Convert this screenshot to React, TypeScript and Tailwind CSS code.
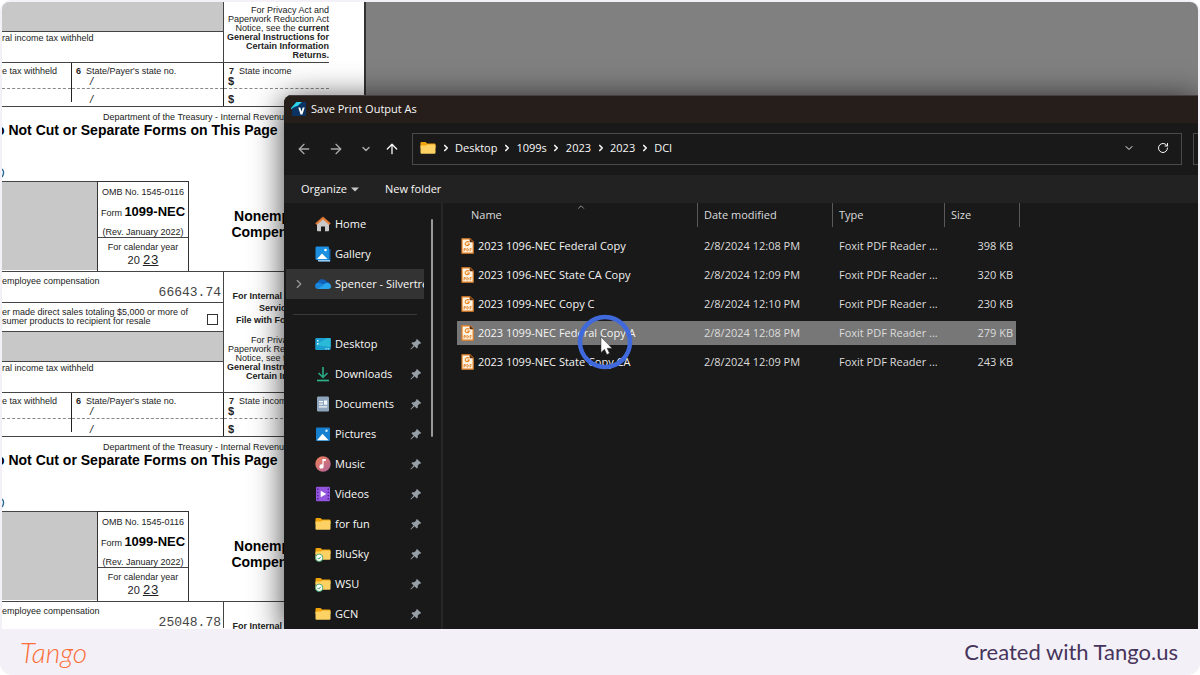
import type { ReactNode } from "react";
import { ArrowLeft, ArrowRight, ArrowUp, ChevronDown, ChevronRight, ChevronUp, RotateCw } from "lucide-react";

const crumbs = ["Desktop", "1099s", "2023", "2023", "DCI"];

const files = [
  { name: "2023 1096-NEC Federal Copy", date: "2/8/2024 12:08 PM", size: "398 KB" },
  { name: "2023 1096-NEC State CA Copy", date: "2/8/2024 12:09 PM", size: "320 KB" },
  { name: "2023 1099-NEC Copy C", date: "2/8/2024 12:10 PM", size: "230 KB" },
  { name: "2023 1099-NEC Federal Copy A", date: "2/8/2024 12:08 PM", size: "279 KB", selected: true },
  { name: "2023 1099-NEC State Copy CA", date: "2/8/2024 12:09 PM", size: "243 KB" },
];

/* ---------- icons ---------- */

function FolderIcon({ synced = false }: { synced?: boolean }) {
  return (
    <svg viewBox="0 0 16 16" className="w-4 h-4 shrink-0">
      <path d="M0.5 3a1 1 0 0 1 1-1h4l1.6 1.6H14.5a1 1 0 0 1 1 1V8H0.5z" fill="#f0a30a" />
      <path d="M0.5 5.6h5.6l1.2-1.2h7.2a1 1 0 0 1 1 1v7.4a1 1 0 0 1-1 1h-13a1 1 0 0 1-1-1z" fill="#fdd264" />
      {synced && (
        <>
          <circle cx="4.2" cy="11.8" r="3.7" fill="#fff" stroke="#35a162" strokeWidth="0.9" />
          <path d="M2.5 11.9l1.2 1.2 2.2-2.4" fill="none" stroke="#2d9a5a" strokeWidth="1" />
        </>
      )}
    </svg>
  );
}

function HomeIcon() {
  return (
    <svg viewBox="0 0 16 16" className="w-4 h-4 shrink-0">
      <path d="M2 7l6-5 6 5v7.4a.8.8 0 0 1-.8.8H10V10.5H6v4.7H2.8a.8.8 0 0 1-.8-.8z" fill="#c9c9c9" />
      <path d="M8 .8L.5 7.3l1.1 1.4L8 3.3l6.4 5.4 1.1-1.4z" fill="#e8803a" stroke="#d9692a" strokeWidth="0.4" />
    </svg>
  );
}

function GalleryIcon() {
  return (
    <svg viewBox="0 0 16 16" className="w-4 h-4 shrink-0">
      <path d="M3 3h12.5v12.5H4.5z" fill="#1565ac" />
      <path d="M3 14h12v1.5H3z" fill="#9cc9ee" />
      <rect x="0.5" y="0.5" width="13.5" height="13.5" rx="1.3" fill="#1d8fe0" />
      <path d="M2 13l5-5.5 5.5 5.5z" fill="#fff" />
      <circle cx="10.5" cy="4" r="1.3" fill="#fff" />
    </svg>
  );
}

function CloudIcon() {
  return (
    <svg viewBox="0 0 16 16" className="w-4 h-4 shrink-0">
      <path d="M3 12.5A3 3 0 0 1 2.6 6.6 5 5 0 0 1 11.6 5.5 3.7 3.7 0 0 1 13 12.5z" fill="#0f62b8" />
      <path d="M2.5 12.8c2-2 5-4.6 8.5-5.8 3-.6 5 1.2 5 3.3a2.7 2.7 0 0 1-2.7 2.7H3.4z" fill="#29a4ee" />
      <path d="M.2 10c0-2 1.5-3.4 3.6-3.3 2 .1 3.4 1.3 5 2.3L2.8 12.9A2.8 2.8 0 0 1 .2 10z" fill="#1a86dc" />
    </svg>
  );
}

function DesktopIcon() {
  return (
    <svg viewBox="0 0 16 16" className="w-4 h-4 shrink-0">
      <rect x="0.3" y="2" width="15.4" height="12" rx="1" fill="#1a9fd0" />
      <path d="M0.3 9L12 2h2.7a1 1 0 0 1 1 1v8z" fill="#2bb9d8" />
      <path d="M2 4h1.5v1.5H2zM2 7h1.5v1.5H2z" fill="#dff6fd" />
      <path d="M10.5 12.3h1.2v1h-1.2zM12.7 12.3h1.2v1h-1.2z" fill="#dff6fd" />
    </svg>
  );
}

function DownloadsIcon() {
  return (
    <svg viewBox="0 0 16 16" className="w-4 h-4 shrink-0" fill="none" strokeWidth="1.7">
      <path d="M8 1v10M3.5 7L8 11.3 12.5 7" stroke="#2aa583" />
      <path d="M2 14.5h12" stroke="#2db38b" />
    </svg>
  );
}

function DocumentsIcon() {
  return (
    <svg viewBox="0 0 16 16" className="w-4 h-4 shrink-0">
      <rect x="2" y="0.5" width="12" height="15" rx="1.2" fill="#8fa5bd" />
      <path d="M4 5h4v1.3H4zM4 7.5h4v1.2H4zM9 4.5h3.2v4.2H9zM4 10.3h8.2v1.2H4z" fill="#f4f8fc" />
    </svg>
  );
}

function PicturesIcon() {
  return (
    <svg viewBox="0 0 16 16" className="w-4 h-4 shrink-0">
      <rect x="1" y="1.5" width="14" height="13.5" rx="1" fill="#1580cf" />
      <path d="M2 14.2l5.5-6.5 6 6.5z" fill="#fff" />
      <circle cx="11.5" cy="4.8" r="1.2" fill="#d7efff" />
    </svg>
  );
}

function MusicIcon() {
  return (
    <svg viewBox="0 0 16 16" className="w-4 h-4 shrink-0">
      <defs>
        <linearGradient id="music" x1="0" y1="0" x2="1" y2="1">
          <stop offset="0" stopColor="#ef8157" />
          <stop offset="1" stopColor="#b0619c" />
        </linearGradient>
      </defs>
      <circle cx="8" cy="8" r="7.7" fill="url(#music)" />
      <path d="M7.4 3h3.4v2H8.600v5.4a2.1 2.1 0 1 1-1.2-1.8z" fill="#fff" />
    </svg>
  );
}

function VideosIcon() {
  return (
    <svg viewBox="0 0 16 16" className="w-4 h-4 shrink-0">
      <rect x="1" y="0.8" width="14" height="14.5" rx="1.2" fill="#9355de" />
      <path
        d="M2 2.5h1.4v1.4H2zM2 5.7h1.4v1.4H2zM2 8.9h1.4v1.4H2zM2 12.1h1.4v1.4H2zM12.6 2.5H14v1.4h-1.4zM12.6 5.7H14v1.4h-1.4zM12.6 8.9H14v1.4h-1.4zM12.6 12.1H14v1.4h-1.4z"
        fill="#4d2192"
      />
      <path d="M5.7 4.8l5.6 3.2-5.6 3.2z" fill="#fff" />
    </svg>
  );
}

function PinIcon() {
  return (
    <svg viewBox="0 0 12 12" className="w-3 h-3 shrink-0">
      <path d="M7 .9l4.2 4.2-.9.7-.7-.1-1.8 1.9v1.9l-1 1-2.3-2.3L1 11.4l-.5-.4 3.1-3.5L1.4 5.3l1-1h2L6.2 2.5V1.8z" fill="#969ea6" />
    </svg>
  );
}

function PdfIcon() {
  return (
    <svg viewBox="0 0 13 16" className="w-[13px] h-4 shrink-0">
      <path d="M1 .8h8l3.2 3.2v11.2H1z" fill="#fff4e2" stroke="#e07c1e" strokeWidth="1.2" />
      <path d="M8.7.5v3.8h3.8z" fill="#5b2c0c" />
      <path d="M8.2 3.9C5.6 3 4 4.5 4.2 6.3c.2 1.6 3.4 1.9 4.1-.3H6.4" fill="none" stroke="#e8811b" strokeWidth="1.1" />
      <path d="M3 13.5v-3h1.3v1.5H3M5.9 10.5v2.5h.7l.8-.7v-1.2l-.8-.6zM9.1 13.5v-3h1.5M9.2 12h1.2" fill="none" stroke="#e07c1e" strokeWidth="0.8" />
    </svg>
  );
}

function AppIcon() {
  return (
    <svg viewBox="0 0 16 16" className="w-4 h-4 shrink-0">
      <path d="M5 1h10v14H1V8z" fill="#0c3463" />
      <path d="M0 8.5V7L5.5 1H11L6.5 5C4 5.5 1.8 6.5 0 8.5z" fill="#2ed3ee" />
      <path d="M7.3 6.5h2l1.2 4 1.2-4h2l-2.3 7h-1.9z" fill="#fff" />
    </svg>
  );
}

/* ---------- printed form behind the dialog ---------- */

function FormCopy({ amount, id, cut = false }: { amount: string; id: string; cut?: boolean }) {
  return (
    <section className="text-[9px] leading-[9px] text-[#222] whitespace-nowrap">
      <div className="flex w-[327px] h-[61px] border-b border-[#444]">
        <div className="w-[222px] border-r border-[#444]">
          <div className="h-[30px] bg-[#c8c8c8] border-b border-[#444]" />
          <p className="pt-[2px]">ral income tax withheld</p>
        </div>
        <p className="flex-1 pt-1 flex flex-col items-end">
          <span>For Privacy Act and</span>
          <span>Paperwork Reduction Act</span>
          <span>
            Notice, see the <b>current</b>
          </span>
          <b>General Instructions for</b>
          <b>Certain Information</b>
          <b>Returns.</b>
        </p>
      </div>

      <div className="flex w-[327px] h-11 border-b border-[#444]">
        <div className="w-[70px] mb-1 border-r border-[#222]">
          <p className="h-[26px] pt-1 border-b border-dashed border-[#888]">e tax withheld</p>
        </div>
        <div className="w-[152px] border-r border-[#222]">
          <div className="h-[26px] pt-1 pl-1 border-b border-dashed border-[#888]">
            <p>
              <b>6</b>&nbsp; State/Payer's state no.
            </p>
            <i className="block pt-px pl-[14px] text-[11px]">/</i>
          </div>
          <i className="block pt-[6px] pl-[18px] text-[11px]">/</i>
        </div>
        <div className="flex-1">
          <div className="h-[26px] pt-1 pl-1 border-b border-dashed border-[#888]">
            <p className="pl-px">
              <b>7</b>&nbsp; State income
            </p>
            <b className="block pt-px text-[11px]">$</b>
          </div>
          <b className="block pt-[6px] pl-1 text-[11px]">$</b>
        </div>
      </div>

      <div className="h-[74px] pt-[6px]">
        <p className="pl-[101px]">Department of the Treasury - Internal Revenue Service</p>
        <h2 className="-ml-[6px] text-[14px] leading-4 font-bold text-black">o Not Cut or Separate Forms on This Page</h2>
        <svg viewBox="0 0 4 10" className="w-1 h-[10px] mt-[30px]">
          <path d="M0 1c2 2 2 5 0 8" fill="none" stroke="#2b6a94" strokeWidth="1.4" />
        </svg>
      </div>

      <div className="flex h-[91px] border-b border-[#444]">
        <div className="w-[95px] shrink-0 pb-px border-t border-[#444]">
          <div className="h-full bg-[#c8c8c8]" />
        </div>
        <div className="w-[92px] shrink-0 border-t border-x border-[#333] text-center">
          <div className="h-[56px] pt-[6px] border-b border-[#444]">
            <p>OMB No. 1545-0116</p>
            <p className="py-[7px] leading-4">
              Form <b className="text-[13px] text-black">1099-NEC</b>
            </p>
            <p>(Rev. January 2022)</p>
          </div>
          <p className="pt-[5px]">For calendar year</p>
          <p className="text-[11px] leading-4">
            20 <u className="font-['Liberation_Mono',monospace] text-[13px]">23</u>
          </p>
        </div>
        <h3 className="w-[182px] shrink-0 pt-[27px] text-center text-[14px] leading-4 font-bold text-black">
          Nonemployee
          <br />
          Compensation
        </h3>
      </div>

      <div className={`flex w-[327px] ${cut ? "h-[26px]" : "h-[60px]"}`}>
        <div className="w-[222px] border-r border-[#444]">
          <div className={`pt-[5px] ${cut ? "" : "h-[31px] border-b border-[#444]"}`}>
            <p>employee compensation</p>
            <p className="pr-[2px] text-right font-['Liberation_Mono',monospace] text-[13px] leading-[13px] text-[#444]">{amount}</p>
          </div>
          {!cut && (
            <div className="h-[29px] flex items-center justify-between pr-[5px] border-b border-[#444]">
              <label htmlFor={id}>
                er made direct sales totaling $5,000 or more of
                <br />
                sumer products to recipient for resale
              </label>
              <input id={id} type="checkbox" className="appearance-none w-[11px] h-[11px] mt-1 border border-[#333] bg-white" />
            </div>
          )}
        </div>
        <p className="w-[98px] pt-5 flex flex-col items-end gap-[3px] font-bold">
          <span>For Internal Revenue</span>
          {!cut && (
            <>
              <span>Service Center</span>
              <span>File with Form 1096.</span>
            </>
          )}
        </p>
      </div>
    </section>
  );
}

/* ---------- save dialog ---------- */

function SideItem({
  icon,
  label,
  pinned = false,
  active = false,
}: {
  icon: ReactNode;
  label: string;
  pinned?: boolean;
  active?: boolean;
}) {
  return (
    <a href="#" className={`flex items-center h-[30px] ml-[2px] mr-[17px] ${active ? "bg-[#333333]" : "pr-[2px]"}`}>
      <span className="w-[29px] shrink-0 pl-[6px]">{active && <ChevronRight className="w-[14px] h-[14px] text-[#9a9a9a]" />}</span>
      {icon}
      <span className="flex-1 pl-1 whitespace-nowrap overflow-hidden">{label}</span>
      {pinned && <PinIcon />}
    </a>
  );
}

function Sidebar() {
  return (
    <nav className="relative w-[159px] shrink-0 pt-[6px] border-r-2 border-[#272727] overflow-hidden">
      <SideItem icon={<HomeIcon />} label="Home" />
      <SideItem icon={<GalleryIcon />} label="Gallery" />
      <SideItem icon={<CloudIcon />} label="Spencer - Silvertre" active />
      <div className="h-[30px] flex items-center pl-[9px] pr-6">
        <hr className="flex-1 border-[#3a3a3a]" />
      </div>
      <SideItem icon={<DesktopIcon />} label="Desktop" pinned />
      <SideItem icon={<DownloadsIcon />} label="Downloads" pinned />
      <SideItem icon={<DocumentsIcon />} label="Documents" pinned />
      <SideItem icon={<PicturesIcon />} label="Pictures" pinned />
      <SideItem icon={<MusicIcon />} label="Music" pinned />
      <SideItem icon={<VideosIcon />} label="Videos" pinned />
      <SideItem icon={<FolderIcon />} label="for fun" pinned />
      <SideItem icon={<FolderIcon synced />} label="BluSky" pinned />
      <SideItem icon={<FolderIcon synced />} label="WSU" pinned />
      <SideItem icon={<FolderIcon />} label="GCN" pinned />
      {/* scroll thumb */}
      <div className="absolute right-2 top-4 w-[2px] h-[218px] rounded bg-[#9b9b9b]" />
    </nav>
  );
}

function ClickMarker() {
  return (
    <svg viewBox="0 0 56 56" className="absolute left-[120px] top-[-4px] w-14 h-14 z-10 pointer-events-none">
      <circle cx="28" cy="28" r="25" fill="none" stroke="#4069dc" strokeWidth="4.5" />
      <path d="M24 23v15.5l3.5-3.2 2.4 5.2 2.6-1.2-2.4-5h4.9z" fill="#fff" stroke="#333" strokeWidth="0.5" />
    </svg>
  );
}

function FileTable() {
  return (
    <table className="table-fixed w-[563px] ml-[14px] self-start text-left whitespace-nowrap text-[#dcdcdc]">
      <colgroup>
        <col className="w-[241px]" />
        <col className="w-[135px]" />
        <col className="w-[112px]" />
        <col className="w-[75px]" />
      </colgroup>
      <thead>
        <tr className="h-7 align-top">
          <th className="p-0 font-normal relative">
            <ChevronUp className="absolute left-[119px] -top-px w-[10px] h-[10px] text-[#aaa]" />
            <div className="h-6 flex items-center pl-[14px] border-r border-[#5a5a5a]">Name</div>
          </th>
          <th className="p-0 font-normal">
            <div className="h-6 flex items-center pl-[6px] border-r border-[#5a5a5a]">Date modified</div>
          </th>
          <th className="p-0 font-normal">
            <div className="h-6 flex items-center pl-[6px] border-r border-[#5a5a5a]">Type</div>
          </th>
          <th className="p-0 font-normal">
            <div className="h-6 flex items-center pl-[6px] border-r border-[#5a5a5a]">Size</div>
          </th>
        </tr>
      </thead>
      <tbody>
        {files.map((file) => {
          const bg = file.selected ? "bg-[#777777]" : "";
          return (
            <tr key={file.name} className="h-[29px]">
              <td className="p-0 relative">
                <div className={`h-6 flex items-center pl-1 gap-1 text-[#f4f4f4] ${bg}`}>
                  <PdfIcon />
                  {file.name}
                </div>
                {file.selected && <ClickMarker />}
              </td>
              <td className="p-0">
                <div className={`h-6 flex items-center pl-[6px] ${bg}`}>{file.date}</div>
              </td>
              <td className="p-0">
                <div className={`h-6 flex items-center pl-[6px] ${bg}`}>Foxit PDF Reader ...</div>
              </td>
              <td className="p-0 pr-1">
                <div className={`h-6 flex items-center justify-end pr-[3px] ${bg}`}>{file.size}</div>
              </td>
            </tr>
          );
        })}
      </tbody>
    </table>
  );
}

function SaveDialog() {
  return (
    <div
      role="dialog"
      aria-label="Save Print Output As"
      className="absolute left-[282px] right-0 top-[93px] bottom-0 flex flex-col rounded-tl-lg overflow-hidden bg-[#191919] text-[#f8f8f8] font-['Open_Sans',sans-serif] text-[11px] leading-[14px] shadow-[0_4px_32px_rgba(0,0,0,0.75)]"
    >
      <header className="h-7 shrink-0 flex items-center gap-1 pl-[7px] pb-[2px] bg-[#261e1a] border-t border-[#45403d]">
        <AppIcon />
        <h1>Save Print Output As</h1>
      </header>

      <div className="h-[52px] shrink-0 flex items-center pl-3">
        <button aria-label="Back" className="w-8 text-[#a8a8a8]">
          <ArrowLeft className="w-4 h-4" />
        </button>
        <button aria-label="Forward" className="w-8 text-[#a8a8a8]">
          <ArrowRight className="w-4 h-4" />
        </button>
        <button aria-label="Recent locations" className="w-6 text-[#a8a8a8]">
          <ChevronDown className="w-3 h-3" strokeWidth={3} />
        </button>
        <button aria-label="Up" className="w-7">
          <ArrowUp className="w-4 h-4" />
        </button>
        <div className="flex-1 h-8 flex items-center pl-[7px] pr-3 pb-[2px] border border-[#4a4a4a]">
          <FolderIcon />
          {crumbs.map((crumb, i) => (
            <span key={i} className="flex items-center">
              <span className="w-[19px] flex justify-center">
                <ChevronRight className="w-[10px] h-[10px]" strokeWidth={4} />
              </span>
              <button>{crumb}</button>
            </span>
          ))}
          <button aria-label="Previous locations" className="ml-auto mr-[22px]">
            <ChevronDown className="w-3 h-3" />
          </button>
          <button aria-label="Refresh">
            <RotateCw className="w-3 h-3" />
          </button>
        </div>
        <div className="w-[5px] h-8 ml-[11px] overflow-hidden">
          <input aria-label="Search DCI" className="w-[200px] h-8 border border-[#4a4a4a] bg-transparent" />
        </div>
      </div>

      <div className="h-7 shrink-0 flex items-center gap-[26px] pl-[17px] bg-[#222222]">
        <button className="flex items-center gap-1">
          Organize
          <svg viewBox="0 0 8 5" className="w-2 h-[5px]">
            <path d="M0 .5h8l-4 4z" fill="#c8c8c8" />
          </svg>
        </button>
        <button>New folder</button>
      </div>

      <div className="flex-1 min-h-0 flex">
        <Sidebar />
        <FileTable />
      </div>
    </div>
  );
}

export default function App() {
  return (
    <div className="bg-white">
      <div className="h-screen flex flex-col rounded-xl overflow-hidden bg-[#f3f1f7] font-['Liberation_Sans',Arial,sans-serif]">
        <main className="relative flex-1 min-h-0 mt-[2px] mx-[2px] rounded-t-lg overflow-hidden bg-[#808080]">
          <div className="w-[364px] h-full overflow-hidden bg-white border-r-2 border-[#333]">
            <FormCopy amount="66643.74" id="resale-1" />
            <FormCopy amount="25048.78" id="resale-2" cut />
          </div>
          <SaveDialog />
        </main>

        <footer className="h-[46px] shrink-0 flex items-center justify-between pl-5 pr-[22px] font-['Lato',sans-serif]">
          <a href="#" className="text-[28px] leading-8 font-light italic text-[#fc6f3d]">
            Tango
          </a>
          <p className="text-[22px] leading-8 text-[#47345c]">Created with Tango.us</p>
        </footer>
      </div>
    </div>
  );
}
